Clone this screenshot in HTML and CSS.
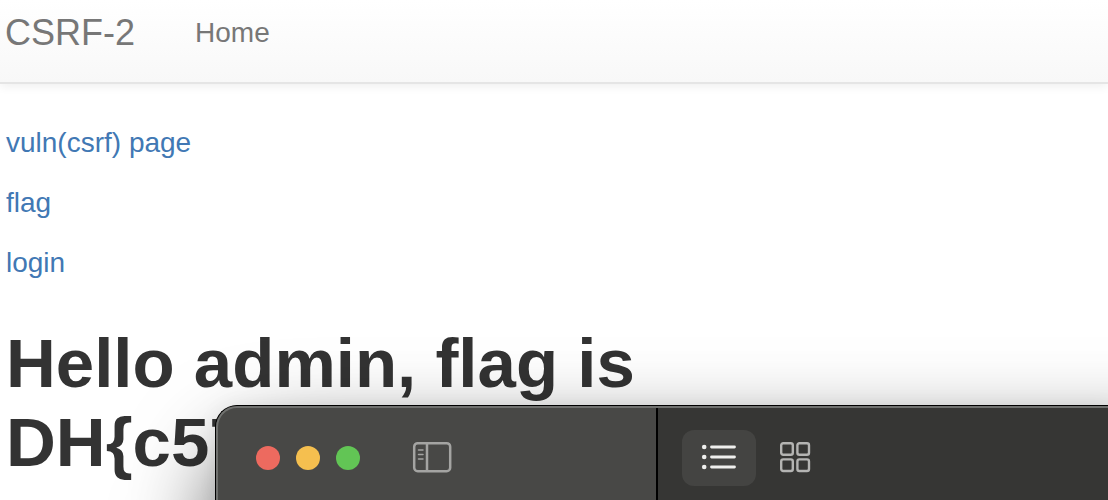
FILE: index.html
```
<!DOCTYPE html>
<html lang="en">
<head>
    <meta charset="utf-8">
    <title>CSRF-2</title>
    <link rel="stylesheet" href="styles.css">
</head>
<body>
    <nav class="navbar">
        <a class="navbar-brand" href="/">CSRF-2</a>
        <a class="navbar-link" href="/">Home</a>
    </nav>

    <main class="container">
        <p><a href="/vuln">vuln(csrf) page</a></p>
        <p><a href="/flag">flag</a></p>
        <p><a href="/login">login</a></p>
        <h1>Hello admin, flag is<br>DH{c57</h1>
    </main>

    <section class="window" aria-label="Window">
        <div class="window-sidebar">
            <div class="lights">
                <button class="light light-close" type="button" aria-label="Close"></button>
                <button class="light light-minimize" type="button" aria-label="Minimize"></button>
                <button class="light light-zoom" type="button" aria-label="Zoom"></button>
            </div>
            <button class="icon-button" type="button" aria-label="Toggle sidebar">
                <svg width="40" height="32" viewBox="0 0 40 32" fill="none" stroke="#a4a4a2" stroke-width="2.500">
                    <rect x="2.200" y="2.200" width="36" height="28" rx="3.500"/>
                    <path d="M15 2v28"/>
                    <path d="M6.500 9h4.500M6.500 13.500h4.500M6.500 18h4.500" stroke-width="1.500" stroke-linecap="round"/>
                </svg>
            </button>
        </div>
        <div class="window-toolbar">
            <button class="tool-button active" type="button" aria-label="List view">
                <svg width="36" height="28" viewBox="0 0 36 28" fill="#efefed" stroke="#efefed" stroke-width="2.800" stroke-linecap="round">
                    <path d="M10.500 4h23M10.500 14h23M10.500 24h23"/>
                    <g stroke="none">
                        <circle cx="3.200" cy="4" r="2.300"/>
                        <circle cx="3.200" cy="14" r="2.300"/>
                        <circle cx="3.200" cy="24" r="2.300"/>
                    </g>
                </svg>
            </button>
            <button class="tool-button" type="button" aria-label="Grid view">
                <svg width="32" height="32" viewBox="0 0 32 32" fill="none" stroke="#b4b4b2" stroke-width="2.400">
                    <rect x="2.200" y="2.200" width="11.600" height="11.600" rx="2"/>
                    <rect x="18.400" y="2.200" width="11.600" height="11.600" rx="2"/>
                    <rect x="2.200" y="18.400" width="11.600" height="11.600" rx="2"/>
                    <rect x="18.400" y="18.400" width="11.600" height="11.600" rx="2"/>
                </svg>
            </button>
        </div>
    </section>
</body>
</html>
```
FILE: styles.css
```
* {
    box-sizing: border-box;
}
html {
    overflow: hidden;
}
body {
    position: relative;
    min-height: 100vh;
    margin: 0;
    overflow: hidden;
    background-color: #fff;
    color: #333;
    font-family: "Helvetica Neue", "Liberation Sans", Arial, sans-serif;
    font-size: 28px;
    line-height: 40px;
}
a {
    color: #4178b4;
    text-decoration: none;
}
button {
    padding: 0;
    border: none;
    background: none;
    cursor: pointer;
}
svg {
    display: block;
}

.navbar {
    display: flex;
    gap: 60px;
    padding: 13px 5px 29px;
    border-bottom: 2px solid #e5e5e5;
    background-image: linear-gradient(#fff, #f8f8f8);
    box-shadow: 0 2px 10px rgba(0, 0, 0, 0.07);
}
.navbar a {
    color: #777;
}
.navbar .navbar-brand {
    font-size: 36px;
}

.container {
    padding: 39px 6px 0;
}
.container p {
    margin: 0 0 20px;
}
h1 {
    margin: 41px 0 0;
    font-size: 69px;
    line-height: 79px;
    white-space: nowrap;
}

/* window floating over the page */
.window {
    position: absolute;
    top: 405px;
    right: 0;
    bottom: 0;
    left: 215px;
    display: flex;
    align-items: flex-start;
    overflow: hidden;
    border: 1px solid #000;
    border-width: 1px 0 0 1px;
    border-radius: 22px 0 0 0;
    background-color: #363634;
    box-shadow: 60px 100px 90px 60px rgba(0, 0, 0, 0.65), 0 0 20px rgba(0, 0, 0, 0.06);
}
.window::after {
    content: "";
    position: absolute;
    inset: 0;
    border: 2px solid #70716f;
    border-width: 2px 0 0 2px;
    border-radius: 21px 0 0 0;
    pointer-events: none;
}
.window-sidebar {
    display: flex;
    align-self: stretch;
    align-items: flex-start;
    gap: 52px;
    width: 442px;
    padding: 35px 40px 0;
    border-right: 2px solid #000;
    background-color: #484846;
}
.lights {
    display: flex;
    gap: 16px;
    padding-top: 5px;
}
.light {
    width: 24px;
    height: 24px;
    border-radius: 50%;
}
.light-close {
    background-color: #ed6a5f;
}
.light-minimize {
    background-color: #f5bf4f;
}
.light-zoom {
    background-color: #62c555;
}
.window-toolbar {
    display: flex;
    gap: 2px;
    padding: 24px 24px 0;
}
.tool-button {
    display: flex;
    align-items: center;
    justify-content: center;
    width: 74px;
    height: 56px;
    padding-bottom: 2px;
    border-radius: 12px;
}
.tool-button.active {
    background-color: #444442;
}
```
